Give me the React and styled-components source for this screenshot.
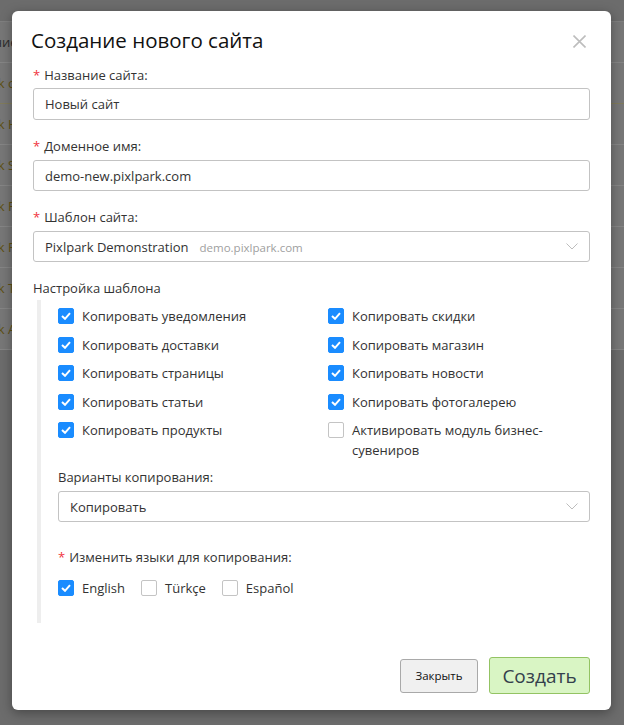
import React from "react";
import styled, { createGlobalStyle } from "styled-components";

const GlobalStyle = createGlobalStyle`
  html, body {
    margin: 0;
    padding: 0;
    background: #6c6c6c;
    font-family: "Open Sans", "Noto Sans", sans-serif;
  }
`;

const Page = styled.div`
  position: relative;
  width: 624px;
  height: 725px;
  overflow: hidden;
  background: #6c6c6c;
`;

// page behind the dialog, already dimmed by the overlay
const BackTable = styled.div`
  margin-top: 21px;
  margin-left: -44px;
  width: 720px;
  background: #777;
  border-top: 1px solid #7f7f7f;
`;

const BackRow = styled.div`
  height: 41px;
  display: flex;
  align-items: center;
  border-bottom: 1px solid ${p => (p.$first ? "#807b5c" : "#858585")};
  font-size: 13px;
  color: ${p => p.$head ? "#2c2c2c" : "#5e5013"};
  box-sizing: border-box;
`;

const Dialog = styled.div`
  position: absolute;
  left: 12px;
  top: 11px;
  width: 599px;
  height: 699px;
  background: #fff;
  border-radius: 6px;
  box-shadow: 0 3px 12px rgba(0, 0, 0, 0.35);
  display: flex;
  flex-direction: column;
  box-sizing: border-box;
`;

const Header = styled.div`
  display: flex;
  align-items: center;
  justify-content: space-between;
  padding: 15px 25px 0 19px;
  height: 28px;
  box-sizing: content-box;
`;

const Title = styled.h2`
  margin: 0;
  font-size: 20.5px;
  font-weight: 400;
  color: #111;
  line-height: 28px;
`;

const Close = styled.button`
  border: 0;
  background: none;
  padding: 0;
  width: 13px;
  height: 13px;
  margin-top: 2px;
  display: flex;
  cursor: pointer;
`;

const Body = styled.div`
  padding: 11px 21px 0 21px;
`;

const Field = styled.div`
  margin-bottom: 16px;
`;

const Label = styled.div`
  font-size: 13px;
  line-height: 20px;
  color: #333;
  margin-bottom: ${p => (p.$tight ? "3px" : "4px")};
`;

const Star = styled.span`
  color: #f0323c;
  margin-right: 4px;
`;

const Input = styled.div`
  height: ${p => (p.$short ? "31px" : "32px")};
  box-sizing: border-box;
  border: 1px solid #c3c3c3;
  border-radius: 3px;
  padding: 0 11px;
  display: flex;
  align-items: center;
  font-size: 13px;
  color: #333;
`;

const SelectBox = styled(Input)`
  justify-content: space-between;
`;

const Hint = styled.span`
  color: #a0a0a0;
  font-size: 11.5px;
  margin-left: 11px;
`;

const SectionTitle = styled.div`
  font-size: 13px;
  line-height: 20px;
  color: #333;
`;

const Section = styled.div`
  margin: 2px 0 0 4px;
  border-left: 4px solid #eeeeee;
  padding: 6px 0 25px 17px;
`;

const CheckGrid = styled.div`
  display: grid;
  grid-template-columns: 270px 1fr;
  row-gap: 8.5px;
`;

const CheckItem = styled.label`
  display: flex;
  align-items: flex-start;
  gap: 8px;
  font-size: 13px;
  line-height: 20px;
  color: #333;
`;

const Box = styled.span`
  flex: none;
  width: 16px;
  height: 16px;
  margin-top: 2px;
  box-sizing: border-box;
  border-radius: 2px;
  display: flex;
  align-items: center;
  justify-content: center;
  background: ${p => (p.$on ? "#1a8cff" : "#fff")};
  border: 1px solid ${p => (p.$on ? "#1a8cff" : "#c4c4c4")};
`;

const SubField = styled.div`
  margin-top: 7px;
`;

const LangField = styled.div`
  margin-top: 25px;
`;

const LangRow = styled.div`
  display: flex;
  gap: 16px;
  margin-top: 11px;
`;

const Footer = styled.div`
  margin-top: auto;
  display: flex;
  justify-content: flex-end;
  align-items: center;
  gap: 11px;
  padding: 0 21px 16px 0;
`;

const Button = styled.button`
  font-family: "Open Sans", "Noto Sans", sans-serif;
  border-radius: 3px;
  cursor: pointer;
  padding: 0;
  width: ${p => (p.$primary ? "101px" : "78px")};
  height: ${p => (p.$primary ? "37px" : "34px")};
  font-size: ${p => (p.$primary ? "19px" : "11.5px")};
  color: ${p => (p.$primary ? "#34404c" : "#111")};
  background: ${p => (p.$primary ? "#d9f5c4" : "#f0f0f0")};
  border: 1px solid ${p => (p.$primary ? "#93c363" : "#a9a9a9")};
`;

const Check = ({ on, children }) => (
  <CheckItem>
    <Box $on={on}>
      {on && (
        <svg width="10" height="8" viewBox="0 0 10 8">
          <path d="M1 4 L4 6.8 L9 1.2" fill="none" stroke="#fff" strokeWidth="2" />
        </svg>
      )}
    </Box>
    <span>{children}</span>
  </CheckItem>
);

const Chevron = () => (
  <svg width="12" height="7" viewBox="0 0 12 7">
    <path d="M0.5 0.5 L6 6 L11.5 0.5" fill="none" stroke="#bdbdbd" strokeWidth="1" />
  </svg>
);

const backRows = ["Название", "Pixlpark сайт", "Pixlpark Новый", "Pixlpark Shop", "Pixlpark Print", "Pixlpark Photo", "Pixlpark Test", "Pixlpark Arts"];

function App() {
  return (
    <Page>
      <GlobalStyle />
      <BackTable>
        {backRows.map((r, i) => (
          <BackRow key={i} $head={i === 0} $first={i === 1}>{r}</BackRow>
        ))}
      </BackTable>

      <Dialog>
        <Header>
          <Title>Создание нового сайта</Title>
          <Close>
            <svg width="13" height="13" viewBox="0 0 13 13">
              <path d="M0.5 0.5 L12.5 12.5 M12.5 0.5 L0.5 12.5" stroke="#bdbdbd" strokeWidth="1.6" />
            </svg>
          </Close>
        </Header>

        <Body>
          <Field>
            <Label $tight><Star>*</Star>Название сайта:</Label>
            <Input>Новый сайт</Input>
          </Field>
          <Field>
            <Label><Star>*</Star>Доменное имя:</Label>
            <Input $short>demo-new.pixlpark.com</Input>
          </Field>
          <Field>
            <Label><Star>*</Star>Шаблон сайта:</Label>
            <SelectBox $short>
              <span>
                Pixlpark Demonstration<Hint>demo.pixlpark.com</Hint>
              </span>
              <Chevron />
            </SelectBox>
          </Field>

          <SectionTitle>Настройка шаблона</SectionTitle>
          <Section>
            <CheckGrid>
              <Check on>Копировать уведомления</Check>
              <Check on>Копировать скидки</Check>
              <Check on>Копировать доставки</Check>
              <Check on>Копировать магазин</Check>
              <Check on>Копировать страницы</Check>
              <Check on>Копировать новости</Check>
              <Check on>Копировать статьи</Check>
              <Check on>Копировать фотогалерею</Check>
              <Check on>Копировать продукты</Check>
              <Check>Активировать модуль бизнес-сувениров</Check>
            </CheckGrid>

            <SubField>
              <Label>Варианты копирования:</Label>
              <SelectBox $short>
                <span>Копировать</span>
                <Chevron />
              </SelectBox>
            </SubField>

            <LangField>
              <Label><Star>*</Star>Изменить языки для копирования:</Label>
              <LangRow>
                <Check on>English</Check>
                <Check>Türkçe</Check>
                <Check>Español</Check>
              </LangRow>
            </LangField>
          </Section>
        </Body>

        <Footer>
          <Button>Закрыть</Button>
          <Button $primary>Создать</Button>
        </Footer>
      </Dialog>
    </Page>
  );
}

export default App;
